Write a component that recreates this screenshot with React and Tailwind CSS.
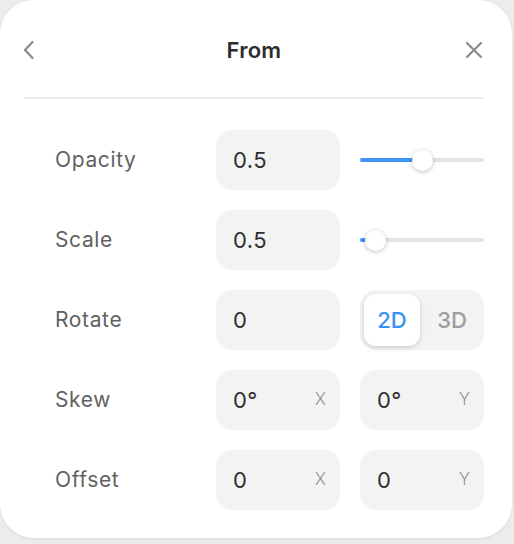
import React, { useState } from "react";

const Field = ({ value, axis }) => (
  <div className="flex items-center justify-between h-[60px] w-[124px] rounded-[16px] bg-[#f3f3f3] pl-[17px] pr-[14px]">
    <span className="text-[22px] tracking-[0.02em] text-[#2f2f2f]">{value}</span>
    {axis ? <span className="text-[17px] font-light text-[#959595]">{axis}</span> : null}
  </div>
);

const Slider = ({ pct }) => (
  <div className="relative h-[60px] w-[124px] flex items-center">
    <div className="h-[4px] w-full rounded-full bg-[#e3e3e3]" />
    <div
      className="absolute left-0 h-[4px] rounded-full bg-[#3e95f6]"
      style={{ width: `${pct}%` }}
    />
    <div
      className="absolute h-[21px] w-[21px] -ml-[10px] rounded-full bg-white shadow-[0_1px_4px_rgba(0,0,0,0.25)]"
      style={{ left: `${pct}%` }}
    />
  </div>
);

const Label = ({ children }) => (
  <span className="w-[161px] text-[21px] tracking-[0.03em] text-[#626262]">{children}</span>
);

export default function App() {
  const [mode, setMode] = useState("2D");

  return (
    <div className="h-[544px] w-[514px] bg-[#ececec] font-['Inter',sans-serif]">
      <div className="h-[538px] w-[512px] rounded-[34px] bg-white shadow-[0_1px_3px_rgba(0,0,0,0.08)]">
        {/* header */}
        <div className="ml-[24px] w-[460px] flex h-[99px] items-center border-b-2 border-[#ececec] pt-[3px]">
          <div className="w-[40px] flex">
            <button className="-ml-[1px] text-[#8a8a8a]">
              <svg width="12" height="20" viewBox="0 0 12 20" fill="none">
                <path d="M9.5 2 L2 10 L9.5 18" stroke="currentColor" strokeWidth="2.2" strokeLinecap="round" strokeLinejoin="round" />
              </svg>
            </button>
          </div>
          <h1 className="flex-1 text-center text-[22px] tracking-[0.01em] font-semibold text-[#2d2d2d]">From</h1>
          <div className="w-[40px] flex justify-end">
            <button className="mr-[1px] text-[#8a8a8a]">
              <svg width="18" height="18" viewBox="0 0 18 18" fill="none">
                <path d="M2 2 L16 16 M16 2 L2 16" stroke="currentColor" strokeWidth="2.2" strokeLinecap="round" />
              </svg>
            </button>
          </div>
        </div>

        {/* rows */}
        <div className="flex flex-col gap-[20px] pt-[31px] pl-[55px]">
          <div className="flex items-center">
            <Label>Opacity</Label>
            <Field value="0.5" />
            <div className="ml-[20px]"><Slider pct={50} /></div>
          </div>
          <div className="flex items-center">
            <Label>Scale</Label>
            <Field value="0.5" />
            <div className="ml-[20px]"><Slider pct={12} /></div>
          </div>
          <div className="flex items-center">
            <Label>Rotate</Label>
            <Field value="0" />
            <div className="ml-[20px] flex h-[60px] w-[124px] gap-[4px] rounded-[16px] bg-[#f3f3f3] p-[4px]">
              {["2D", "3D"].map((m) => (
                <button
                  key={m}
                  onClick={() => setMode(m)}
                  className={
                    mode === m
                      ? "flex-1 rounded-[12px] bg-white text-[22px] font-medium text-[#3b91f3] shadow-[0_2px_5px_rgba(0,0,0,0.15)]"
                      : "flex-1 rounded-[12px] text-[22px] font-medium text-[#9c9c9c]"
                  }
                >
                  {m}
                </button>
              ))}
            </div>
          </div>
          <div className="flex items-center">
            <Label>Skew</Label>
            <Field value="0°" axis="X" />
            <div className="ml-[20px]"><Field value="0°" axis="Y" /></div>
          </div>
          <div className="flex items-center">
            <Label>Offset</Label>
            <Field value="0" axis="X" />
            <div className="ml-[20px]"><Field value="0" axis="Y" /></div>
          </div>
        </div>
      </div>
    </div>
  );
}
